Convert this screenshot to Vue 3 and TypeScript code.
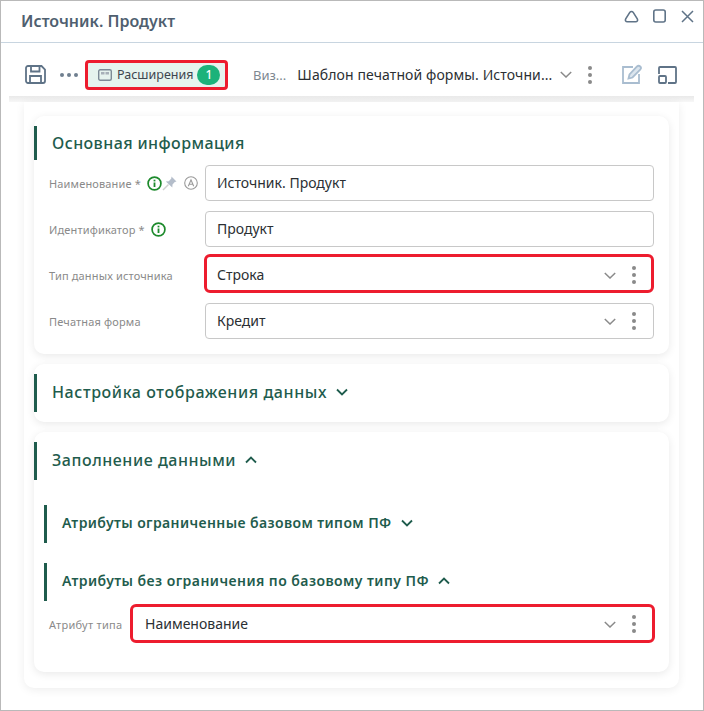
<script setup lang="ts">
interface Field { label: string; value: string; icons?: string[]; select?: boolean; hl?: boolean }
const fields: Field[] = [
  { label: 'Наименование *', value: 'Источник. Продукт', icons: ['info', 'pin', 'a'] },
  { label: 'Идентификатор *', value: 'Продукт', icons: ['info'] },
  { label: 'Тип данных источника', value: 'Строка', select: true, hl: true },
  { label: 'Печатная форма', value: 'Кредит', select: true },
]
</script>

<template>
  <div class="win">
    <header class="head">
      <h1 class="wtitle">Источник. Продукт</h1>
      <div class="wbtns">
        <svg width="15" height="13" viewBox="0 0 15 13"><path d="M5.800 2.400C6.600 1.200 8.400 1.200 9.200 2.400L13.300 8.800C14.100 10.200 13.300 11.800 11.600 11.800H3.400C1.700 11.800 .9 10.200 1.700 8.800Z" fill="none" stroke="#5f7387" stroke-width="1.600"/></svg>
        <svg width="13" height="14" viewBox="0 0 13 14"><rect x=".8" y="1" width="11.400" height="12" rx="2" fill="none" stroke="#5f7387" stroke-width="1.600"/></svg>
        <svg width="13" height="13" viewBox="0 0 13 13"><path d="M1 1l11 11M12 1L1 12" stroke="#5f7387" stroke-width="1.500" fill="none"/></svg>
      </div>
    </header>
    <div class="tools">
      <svg class="save" width="21" height="19" viewBox="0 0 21 19" fill="none" stroke="#5f7387" stroke-width="1.800"><path d="M1 3A2 2 0 0 1 3 1H16.500L20 4.500V16A2 2 0 0 1 18 18H3A2 2 0 0 1 1 16Z"/><path d="M6 1.500V6.500H14.500V1.500"/><path d="M5 18V11H16V18"/></svg>
      <div class="dots"><i></i><i></i><i></i></div>
      <button class="ext">
        <svg width="14" height="12" viewBox="0 0 14 12"><rect x=".7" y=".7" width="12.600" height="10.600" rx="1.500" fill="none" stroke="#7d8a96" stroke-width="1.400"/><rect x="3" y="3" width="3.500" height="2.500" fill="#a7b0b8"/><rect x="7.500" y="3" width="3.500" height="2.500" fill="#a7b0b8"/></svg>
        <span class="ext-t">Расширения</span>
        <span class="badge">1</span>
      </button>
      <span class="viz">Виз...</span>
      <span class="tpl">Шаблон печатной формы. Источни...</span>
      <svg class="chev" width="12" height="7" viewBox="0 0 12 7"><path d="M.8 1L6 6l5.200-5" fill="none" stroke="#8a8a8a" stroke-width="1.500"/></svg>
      <div class="vdots"><i></i><i></i><i></i></div>
      <svg class="edit" width="22" height="21" viewBox="0 0 22 21" fill="none" stroke="#a9bdd0" stroke-width="1.800"><path d="M12 3H2V19H18V10"/><path d="M7.500 14.500L8.500 10.500L16 2.500C17 1.500 18.200 1.500 19.200 2.500C20.200 3.500 20.200 4.700 19.200 5.700L11.500 13.500Z" fill="#dbe5ee"/></svg>
      <svg class="resize" width="19" height="18" viewBox="0 0 19 18" fill="none" stroke="#5f7387" stroke-width="1.800"><path d="M1 8V2A1 1 0 0 1 2 1H17A1 1 0 0 1 18 2V16A1 1 0 0 1 17 17H10"/><rect x="1" y="10" width="7" height="7" rx="1"/></svg>
    </div>
    <div class="strip"></div>
    <main class="outer">
      <section class="card c1">
        <h2 class="sec">Основная информация</h2>
        <div class="rows">
          <div v-for="f in fields" :key="f.label" class="row">
            <div class="lab">
              <span>{{ f.label }}</span>
              <template v-for="ic in f.icons" :key="ic">
                <svg v-if="ic === 'info'" class="ic-info" width="15" height="15" viewBox="0 0 15 15"><circle cx="7.500" cy="7.500" r="6.400" fill="none" stroke="#1d8a2c" stroke-width="1.700"/><rect x="6.600" y="6.500" width="1.800" height="4.500" fill="#1d8a2c"/><rect x="6.600" y="3.700" width="1.800" height="1.700" fill="#1d8a2c"/></svg>
                <svg v-else-if="ic === 'pin'" class="ic-pin" width="15" height="15" viewBox="0 0 15 15"><path d="M9.500 .5L14.500 5.500L12.800 6L10.500 8.500L10.300 11.500L3.800 5.500L6.800 5.200L9.300 2.500Z" fill="#b4bdca"/><path d="M6.500 8.500L1 14" stroke="#d0d0d0" stroke-width="1.400"/></svg>
                <svg v-else class="ic-a" width="14" height="14" viewBox="0 0 14 14"><circle cx="7" cy="7" r="6.300" fill="none" stroke="#9a9a9a" stroke-width="1.100"/><path d="M4.300 10.200L7 3.800l2.700 6.400M5.200 8.300h3.600" fill="none" stroke="#9a9a9a" stroke-width="1.100"/></svg>
              </template>
            </div>
            <div class="inp" :class="{ hl: f.hl }">
              <span class="val">{{ f.value }}</span>
              <template v-if="f.select">
                <svg width="12" height="7" viewBox="0 0 12 7"><path d="M.8 1L6 6l5.200-5" fill="none" stroke="#8a8a8a" stroke-width="1.500"/></svg>
                <div class="vdots"><i></i><i></i><i></i></div>
              </template>
            </div>
          </div>
        </div>
      </section>
      <section class="card c2">
        <h2 class="sec">Настройка отображения данных
          <svg width="12" height="8" viewBox="0 0 12 8"><path d="M1 1.500l5 5 5-5" fill="none" stroke="#1f5c4d" stroke-width="1.800"/></svg>
        </h2>
      </section>
      <section class="card c3">
        <h2 class="sec">Заполнение данными
          <svg width="12" height="8" viewBox="0 0 12 8"><path d="M1 6.500l5-5 5 5" fill="none" stroke="#1f5c4d" stroke-width="1.800"/></svg>
        </h2>
        <h3 class="sub s1">Атрибуты ограниченные базовом типом ПФ
          <svg width="12" height="8" viewBox="0 0 12 8"><path d="M1 1.500l5 5 5-5" fill="none" stroke="#1f5c4d" stroke-width="1.800"/></svg>
        </h3>
        <h3 class="sub s2">Атрибуты без ограничения по базовому типу ПФ
          <svg width="12" height="8" viewBox="0 0 12 8"><path d="M1 6.500l5-5 5 5" fill="none" stroke="#1f5c4d" stroke-width="1.800"/></svg>
        </h3>
        <div class="row attr">
          <div class="lab short">Атрибут типа</div>
          <div class="inp hl big">
            <span class="val">Наименование</span>
            <svg width="12" height="7" viewBox="0 0 12 7"><path d="M.8 1L6 6l5.200-5" fill="none" stroke="#8a8a8a" stroke-width="1.500"/></svg>
            <div class="vdots"><i></i><i></i><i></i></div>
          </div>
        </div>
      </section>
    </main>
  </div>
</template>

<style>
html, body { margin: 0; background: #fff; }
</style>

<style scoped>
* { box-sizing: border-box; }
.win { width: 704px; height: 711px; border: 1px solid #b9b9b9; background: #fff; font-family: "Noto Sans", sans-serif; overflow: hidden; display: flex; flex-direction: column; }
.head { height: 42px; flex: none; border-bottom: 1px solid #c8d5e0; display: flex; align-items: center; justify-content: space-between; padding: 0 9px 0 20px; }
.wtitle { margin: 0 0 2px; font-size: 16px; font-weight: 600; color: #4f5f70; }
.wbtns { display: flex; align-items: center; gap: 14px; margin-top: -11px; }
.wbtns svg + svg + svg { margin-left: 1px; }
.tools { height: 53px; flex: none; display: flex; align-items: center; padding: 10px 0 0 24px; }
.save { flex: none; }
.dots { display: flex; gap: 3px; margin-left: 14px; }
.dots i { width: 4px; height: 4px; border-radius: 50%; background: #6f7f8f; }
.ext { margin-left: 7px; height: 30px; width: 143px; border: 3px solid #ed1c2e; border-radius: 4px; background: #e6f3ee; display: flex; align-items: center; padding: 0 0 0 10px; font: inherit; }
.ext-t { margin-left: 5px; font-size: 12.500px; color: #3d4650; }
.badge { margin-left: 4px; width: 23px; height: 20px; border-radius: 10px; background: #1cb27a; color: #fff; font-size: 12px; font-weight: 500; display: flex; align-items: center; justify-content: center; }
.viz { margin-left: 25px; font-size: 13px; color: #7d8790; }
.tpl { margin-left: 11px; font-size: 14px; letter-spacing: .1px; color: #2b2f33; white-space: nowrap; }
.chev { margin-left: 8px; }
.vdots { display: flex; flex-direction: column; gap: 3px; margin-left: 16px; }
.vdots i { width: 4px; height: 4px; border-radius: 50%; background: #8a8a8a; }
.edit { margin-left: 29px; flex: none; }
.resize { margin-left: 15px; flex: none; }
.strip { height: 6px; flex: none; margin: 0 9px 0 8px; background: linear-gradient(#e9e9e9, #f7f7f7); }
.outer { margin: 0 0 0 23px; width: 655px; height: 586px; border-radius: 0 0 10px 10px; background: #fff; box-shadow: 0 2px 10px rgba(0,0,0,.07); padding: 14px 10px 0; display: flex; flex-direction: column; gap: 10px; }
.card { background: #fff; border-radius: 10px; box-shadow: 0 2px 8px rgba(0,0,0,.09); flex: none; }
.c1 { height: 238px; padding-top: 10px; }
.c2 { height: 58px; padding-top: 10px; }
.c3 { height: 240px; padding-top: 10px; }
.sec { margin: 0; height: 34px; border-left: 3px solid #1f5c4d; padding-left: 15px; font-size: 16px; font-weight: 500; color: #1f5c4d; display: flex; align-items: center; gap: 9px; }
.c1 .sec { letter-spacing: .42px; }
.c2 .sec { height: 38px; padding-bottom: 2px; letter-spacing: .6px; }
.c3 .sec { height: 38px; padding-bottom: 2px; letter-spacing: .55px; }
.rows { margin-top: 5px; display: flex; flex-direction: column; gap: 10px; }
.row { display: flex; align-items: center; }
.lab { width: 171px; padding-left: 15px; flex: none; font-size: 11px; letter-spacing: .15px; color: #8a8a8a; display: flex; align-items: center; white-space: nowrap; }
.lab.short { width: 97px; letter-spacing: .3px; }
.ic-info { margin-left: 6px; flex: none; }
.ic-pin { margin-left: 0; flex: none; }
.ic-a { margin-left: 7px; flex: none; }
.inp { position: relative; width: 449px; height: 36px; border: 1px solid #c8c8c8; border-radius: 4px; display: flex; align-items: center; padding: 0 17px 0 11px; background: #fff; }
.inp.hl { border-color: transparent; }
.inp.hl::after { content: ""; position: absolute; inset: -4px -1px -1px -2px; border: 3px solid #ed1c2e; border-radius: 6px; pointer-events: none; }
.inp.big { width: 523px; padding-left: 13px; }
.inp.big::after { inset: -3px -2px -2px -2px; }
.val { flex: 1; font-size: 14px; color: #2b2f33; padding-bottom: 2px; }
.sub { margin: 0 0 0 10px; height: 38px; border-left: 3px solid #1f5c4d; padding-left: 15px; padding-bottom: 3px; font-size: 14px; font-weight: 600; color: #1f5c4d; display: flex; align-items: center; gap: 9px; }
.s1 { margin-top: 25px; letter-spacing: .4px; }
.s2 { margin-top: 20px; letter-spacing: .45px; }
.attr { margin-top: 5px; }
</style>
